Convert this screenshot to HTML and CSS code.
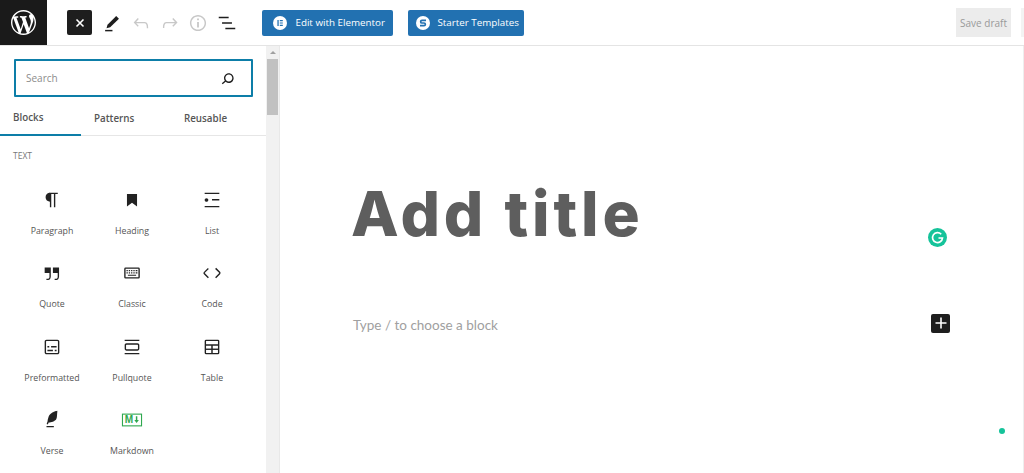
FILE: index.html
```html
<!DOCTYPE html>
<html lang="en">
<head>
<meta charset="utf-8">
<title>Add New Post</title>
<link rel="stylesheet" href="styles.css">
</head>
<body>
<div class="app">
  <header class="topbar">
    <a class="logo"><svg width="25" height="25" viewBox="0 0 20 20"><path fill="#fff" d="M20 10c0-5.51-4.49-10-10-10C4.48 0 0 4.49 0 10c0 5.52 4.48 10 10 10 5.51 0 10-4.48 10-10zM7.78 15.37L4.37 6.22c.55-.02 1.17-.08 1.17-.08.5-.06.44-1.13-.06-1.11 0 0-1.45.11-2.37.11-.18 0-.37 0-.58-.01C4.12 2.69 6.87 1.11 10 1.11c2.33 0 4.45.87 6.05 2.34-.68-.11-1.65.39-1.65 1.58 0 .74.45 1.36.9 2.1.35.61.55 1.36.55 2.46 0 1.49-1.4 5-1.4 5l-3.03-8.37c.54-.02.82-.17.82-.17.5-.05.44-1.25-.06-1.22 0 0-1.44.12-2.38.12-.87 0-2.33-.12-2.33-.12-.5-.03-.56 1.2-.06 1.22l.92.08 1.26 3.41zM17.41 10c.24-.64.74-1.87.43-4.25.7 1.29 1.05 2.71 1.05 4.25 0 3.29-1.73 6.24-4.4 7.78.97-2.59 1.94-5.2 2.92-7.78zM6.1 18.09C3.12 16.65 1.11 13.53 1.11 10c0-1.3.23-2.48.72-3.59C3.25 10.3 4.67 14.2 6.1 18.09zm4.03-6.63l2.58 6.98c-.86.29-1.76.45-2.71.45-.79 0-1.57-.11-2.29-.33.81-2.38 1.62-4.74 2.42-7.1z"/></svg></a>
    <div class="tools">
      <button class="close"><svg width="12" height="12" viewBox="0 0 12 12"><path d="M2.5 2.5l7 7M9.5 2.5l-7 7" stroke="#fff" stroke-width="1.6"/></svg></button>
      <span class="tool"><svg width="24" height="24" viewBox="0 0 24 24"><path fill="#1e1e1e" d="M16.6 4.3l3 3L10 16.7l-4 1.1 1.1-4z"/><rect x="4.5" y="19.5" width="8" height="1.6" fill="#1e1e1e"/></svg></span>
      <span class="tool muted"><svg width="24" height="24" viewBox="0 0 24 24"><path d="M18.3 11.7c-.6-.6-1.4-.9-2.3-.9H6.7l2.9-3.3-1.1-1-4.5 5L8.5 16l1-1-2.7-2.7H16c.5 0 .9.2 1.3.5 1 1 1 3.4 1 4.5v.3h1.5v-.2c0-1.5 0-4.3-1.5-5.7z"/></svg></span>
      <span class="tool muted"><svg width="24" height="24" viewBox="0 0 24 24"><path d="M15.6 6.5l-1.1 1 2.9 3.3H8c-.9 0-1.7.3-2.3.9-1.4 1.5-1.4 4.2-1.4 5.6v.2h1.5v-.3c0-1.1 0-3.5 1-4.5.3-.3.7-.5 1.3-.5h9.2L14.5 15l1.1 1.1 4.6-4.6-4.6-5z"/></svg></span>
      <span class="tool muted"><svg width="24" height="24" viewBox="0 0 24 24"><path d="M12 3.2c-4.8 0-8.8 3.9-8.8 8.8 0 4.8 3.9 8.8 8.8 8.8 4.8 0 8.8-3.9 8.8-8.8 0-4.8-4-8.8-8.8-8.8zm0 16c-4 0-7.2-3.3-7.2-7.2C4.8 8 8 4.8 12 4.8s7.2 3.3 7.2 7.2c0 4-3.2 7.2-7.2 7.2zM11 17h2v-6h-2v6zm0-8h2V7h-2v2z"/></svg></span>
      <span class="tool"><svg width="24" height="24" viewBox="0 0 24 24"><path fill="#1e1e1e" d="M13.8 5.2H3v1.5h10.8V5.2zm-3.6 12v1.5H21v-1.5H10.2zm7.2-6H6.6v1.5h10.8v-1.5z"/></svg></span>
    </div>
    <div class="actions">
      <button class="blue wide"><svg width="14" height="14" viewBox="0 0 14 14"><circle cx="7" cy="7" r="7" fill="#fff"/><path fill="#2271b1" d="M4.4 4h1.3v6H4.4zM6.8 4h3v1.2h-3zM6.8 6.4h3v1.2h-3zM6.8 8.8h3V10h-3z"/></svg><span>Edit with Elementor</span></button>
      <button class="blue"><svg width="14" height="14" viewBox="0 0 14 14"><circle cx="7" cy="7" r="7" fill="#fff"/><path fill="none" stroke="#2271b1" stroke-width="1.7" d="M10 4.3H6a1.35 1.35 0 0 0 0 2.7h2a1.35 1.35 0 0 1 0 2.7H4"/></svg><span>Starter Templates</span></button>
    </div>
    <div class="publish">
      <button class="save">Save draft</button>
      <span class="stub"></span>
    </div>
  </header>
  <div class="main">
    <aside class="inserter">
      <div class="panel">
        <div class="search"><span>Search</span><svg width="24" height="24" viewBox="0 0 24 24"><path fill="#1e1e1e" d="M13.5 6C10.5 6 8 8.5 8 11.5c0 1.1.3 2.1.9 3l-3.4 3 1 1.1 3.4-2.9c1 .9 2.2 1.4 3.6 1.4 3 0 5.5-2.5 5.5-5.5C19 8.5 16.5 6 13.5 6zm0 9.5c-2.2 0-4-1.8-4-4s1.8-4 4-4 4 1.8 4 4-1.8 4-4 4z"/></svg></div>
        <nav class="tabs">
          <span class="tab active">Blocks</span>
          <span class="tab">Patterns</span>
          <span class="tab">Reusable</span>
        </nav>
        <h2 class="cat">TEXT</h2>
        <div class="grid">
          <div class="block"><svg width="24" height="24" viewBox="0 0 24 24"><path d="M18.3 4H9.9v-.1l-.9.2c-2.3.4-4 2.4-4 4.8s1.7 4.4 4 4.8l.7.1V20h1.5V5.5h2.9V20h1.5V5.5h2.7V4z"/></svg><span>Paragraph</span></div>
          <div class="block"><svg width="24" height="24" viewBox="0 0 24 24"><path d="M6.500 5.500h11V19l-5.500-4-5.500 4z"/></svg><span>Heading</span></div>
          <div class="block"><svg width="24" height="24" viewBox="0 0 24 24"><path d="M4 4v1.5h16V4H4zm8 8.5h8V11h-8v1.5zM4 20h16v-1.5H4V20zm4-8c0-1.1-.9-2-2-2s-2 .9-2 2 .9 2 2 2 2-.9 2-2z"/></svg><span>List</span></div>
          <div class="block"><svg width="24" height="24" viewBox="0 0 24 24"><path d="M13 6v6h5.2v4c0 .8-.2 1.4-.5 1.7-.6.6-1.6.6-2.5.5h-.3v1.5h.5c1 0 2.3-.1 3.3-1 .6-.6 1-1.6 1-2.8V6H13zm-9 6h5.2v4c0 .8-.2 1.4-.5 1.7-.6.6-1.6.6-2.5.5h-.3v1.5h.5c1 0 2.3-.1 3.3-1 .6-.6 1-1.6 1-2.8V6H4v6z"/></svg><span>Quote</span></div>
          <div class="block"><svg width="24" height="24" viewBox="0 0 24 24"><path fill-rule="evenodd" d="M5 6h14a1.500 1.500 0 0 1 1.500 1.500v9A1.500 1.500 0 0 1 19 18H5a1.500 1.500 0 0 1-1.500-1.500v-9A1.500 1.500 0 0 1 5 6zm0 1.300v9.400h14V7.300z"/><path d="M6 8.800h1.400v1.300H6zM8.500 8.800h1.400v1.300H8.500zM11 8.800h1.400v1.300H11zM13.500 8.800h1.400v1.300h-1.400zM16 8.800h1.900v1.300H16zM6 11.200h1.400v1.300H6zM8.500 11.200h1.400v1.300H8.500zM11 11.200h1.400v1.300H11zM13.500 11.200h1.400v1.300h-1.400zM16 11.200h1.900v1.300H16zM7.500 13.800h9v1.300h-9z"/></svg><span>Classic</span></div>
          <div class="block"><svg width="24" height="24" viewBox="0 0 24 24"><path d="M20.800 10.700l-4.300-4.300-1.100 1.100 4.300 4.300c.1.1.1.3 0 .4l-4.300 4.300 1.100 1.100 4.300-4.300c.7-.8.7-1.900 0-2.600zM4.200 11.800l4.300-4.300-1-1-4.300 4.300c-.7.700-.7 1.800 0 2.500l4.300 4.300 1.100-1.100-4.300-4.300c-.2-.1-.2-.3-.1-.4z"/></svg><span>Code</span></div>
          <div class="block"><svg width="24" height="24" viewBox="0 0 24 24"><path d="M18 4H6c-1.100 0-2 .9-2 2v12c0 1.100.9 2 2 2h12c1.100 0 2-.9 2-2V6c0-1.100-.9-2-2-2zm.5 14c0 .3-.2.5-.5.5H6c-.3 0-.5-.2-.5-.5V6c0-.3.2-.5.5-.5h12c.3 0 .5.2.5.5v12zM7 16.500h6V15H7v1.500zm4-4h6V11h-6v1.500zM9 11H7v1.500h2V11zm6 5.500h2V15h-2v1.500z"/></svg><span>Preformatted</span></div>
          <div class="block"><svg width="24" height="24" viewBox="0 0 24 24"><path d="M18 8H6c-1.100 0-2 .9-2 2v4c0 1.100.9 2 2 2h12c1.100 0 2-.9 2-2v-4c0-1.100-.9-2-2-2zm.5 6c0 .3-.2.5-.5.5H6c-.3 0-.5-.2-.5-.5v-4c0-.3.2-.5.5-.5h12c.3 0 .5.200.5.500v4zM4 4v1.500h16V4H4zm0 16h16v-1.500H4V20z"/></svg><span>Pullquote</span></div>
          <div class="block"><svg width="24" height="24" viewBox="0 0 24 24"><path fill-rule="evenodd" d="M5.500 4h13A1.500 1.500 0 0 1 20 5.500v13a1.500 1.500 0 0 1-1.500 1.500h-13A1.500 1.500 0 0 1 4 18.500v-13A1.500 1.500 0 0 1 5.500 4zm0 1.500V9h13V5.500zm0 5v8h5.700v-8zm7.300 0v8h5.700v-8z"/><path d="M5 13.700h14v1.500H5z"/></svg><span>Table</span></div>
          <div class="block"><svg width="24" height="24" viewBox="0 0 24 24"><path d="M17.800 2l-.9.3c-.1 0-3.600 1-5.200 2.100C10 5.500 9.300 6.500 8.900 7.100c-.6.9-1.700 4.700-1.700 6.300l-.9 2.300c-.2.400 0 .8.400 1 .1 0 .2.1.3.1.3 0 .6-.2.7-.5l.6-1.500c.3 0 .7-.1 1.200-.2.700-.1 1.400-.3 2.200-.5.800-.2 1.600-.5 2.400-.8.700-.3 1.400-.7 1.900-1.200s.8-1.200 1-1.900c.2-.7.3-1.600.4-2.400.1-.8.1-1.700.2-2.500 0-.8.1-1.500.2-2.100V2zM6 20h8v-1.500H6V20z"/></svg><span>Verse</span></div>
          <div class="block"><svg class="md" width="24" height="24" viewBox="0 0 24 24"><rect x="1.600" y="5.600" width="20.800" height="12.800" fill="none" stroke="#2fa84f" stroke-width="1.200"/><text x="4" y="15.500" class="md-m">M</text><path fill="#2fa84f" d="M16.200 8h1.600v4h1.700l-2.500 3.300L14.500 12h1.700z"/></svg><span>Markdown</span></div>
        </div>
      </div>
      <div class="scrollbar">
        <span class="arrow"></span>
        <span class="thumb"></span>
      </div>
    </aside>
    <main class="editor">
      <div class="grammarly"><svg width="19" height="19" viewBox="0 0 19 19"><circle cx="9.500" cy="9.500" r="9.500" fill="#15c39a"/><path fill="none" stroke="#fff" stroke-width="1.700" d="M13.200 6.200A5 5 0 1 0 14.500 10H10.500"/></svg></div>
      <h1 class="title">Add title</h1>
      <div class="row">
        <p class="placeholder">Type / to choose a block</p>
        <button class="plus"><svg width="12" height="12" viewBox="0 0 12 12"><path d="M6 .5v11M.5 6h11" stroke="#fff" stroke-width="1.600"/></svg></button>
      </div>
      <span class="dot"></span>
    </main>
  </div>
</div>
</body>
</html>
```
FILE: styles.css
```css
* { box-sizing: border-box; }
html, body { margin: 0; height: 100%; overflow: hidden; background: #fff; }
body { font-family: "Open Sans", "Noto Sans", sans-serif; color: #444; }
button { font-family: inherit; border: 0; padding: 0; margin: 0; }
svg { display: block; flex: none; }

.app { display: flex; flex-direction: column; height: 473px; }

.topbar { display: flex; align-items: center; height: 46px; border-bottom: 1px solid #e4e4e4; flex: none; }
.logo { width: 47px; height: 45px; background: #1a1a1a; display: flex; align-items: center; justify-content: center; }
.tools { display: flex; align-items: center; margin-left: 20px; }
.close { width: 25px; height: 25px; background: #1e1e1e; border-radius: 2px; display: flex; align-items: center; justify-content: center; margin-right: 6px; }
.tool { width: 28.700px; display: flex; justify-content: center; }
.tool svg { width: 22px; height: 22px; }
.muted svg { fill: #c8c8c8; }
.actions { display: flex; gap: 15px; margin-left: 21px; }
.blue { display: flex; align-items: center; height: 26px; width: 116px; padding-left: 8px; gap: 7px; background: #2271b1; color: #fff; border-radius: 2px; font-size: 9.800px; white-space: nowrap; }
.blue.wide { width: 131px; padding-left: 11px; gap: 8px; }
.publish { display: flex; align-items: center; margin-left: auto; }
.save { width: 55px; height: 29px; background: #ececec; color: #9a9a9a; font-size: 10px; white-space: nowrap; }
.stub { width: 3px; height: 29px; background: #f3f3f3; margin-left: 10px; }

.main { display: flex; flex: 1; min-height: 0; }
.inserter { width: 280px; display: flex; flex: none; border-right: 1px solid #e8e8e8; }
.panel { width: 266px; flex: none; }
.search { margin: 13px 13px 0 14px; height: 38px; border: 2px solid #0d7ea8; border-radius: 1px; display: flex; align-items: center; justify-content: space-between; padding: 0 13px 0 10px; font-size: 10px; color: #8c8c8c; }
.search svg { width: 21px; height: 21px; }
.tabs { display: grid; grid-template-columns: 81px 65px 1fr; height: 39px; border-bottom: 1px solid #e6e6e6; font-size: 9.800px; font-weight: 600; color: #555; }
.tab { display: flex; align-items: center; padding: 3px 0 0 13px; }
.tab.active { border-bottom: 2px solid #0d7ea8; height: 39px; }
.tab:nth-child(3) { justify-content: center; padding-left: 0; padding-right: 1px; }
.cat { margin: 14px 0 0 13px; font-size: 8.500px; font-weight: 400; line-height: 12px; color: #777; }
.grid { display: grid; grid-template-columns: repeat(3, 80px); grid-auto-rows: 73.300px; margin: 18px 0 0 12px; }
.block { display: flex; flex-direction: column; align-items: center; font-size: 8.800px; color: #555; padding-top: 9px; }
.block svg { fill: #222; width: 22px; height: 22px; margin-bottom: 13px; }
.block span { line-height: 14px; }
.md-m { font-family: "Liberation Sans", sans-serif; font-size: 11px; font-weight: 700; fill: #2fa84f; }

.scrollbar { width: 13px; flex: none; background: #f1f1f1; display: flex; flex-direction: column; align-items: center; }
.arrow { margin-top: 5px; width: 0; height: 0; border: 3px solid transparent; border-top: 0; border-bottom: 3px solid #a0a0a0; }
.thumb { width: 11px; height: 56px; margin-top: 5px; background: #c1c1c1; }

.editor { position: relative; flex: 1; padding: 126px 73px 0 73px; border-right: 1px solid #eee; }
.title { margin: 0 0 0 -2px; font-family: Inter, sans-serif; font-weight: 800; font-size: 62px; letter-spacing: 3.800px; line-height: 84px; color: #5e5e5e; white-space: nowrap; }
.row { display: flex; align-items: center; justify-content: space-between; margin-top: 52px; height: 30px; }
.placeholder { margin: 4px 0 0; font-family: Lato, sans-serif; font-size: 13.500px; color: #a0a0a0; }
.plus { width: 19px; height: 19px; background: #1e1e1e; border-radius: 2px; display: flex; align-items: center; justify-content: center; }
.grammarly { position: absolute; left: 648px; top: 182px; }
.dot { position: absolute; left: 719px; top: 382px; width: 6px; height: 6px; border-radius: 50%; background: #15c39a; }
```
